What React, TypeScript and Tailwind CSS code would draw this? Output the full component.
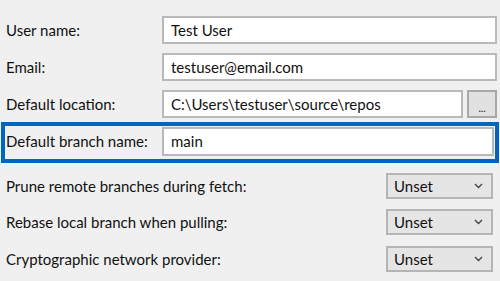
import React from "react";

const font = { fontFamily: 'Lato, "Open Sans", sans-serif' };

function TextInput({ value, className }: { value: string; className: string }) {
  return (
    <div
      className={`flex items-center bg-white border-2 border-[#b9b9b9] pl-[7px] text-[15px] text-[#111] ${className}`}
    >
      {value}
    </div>
  );
}

function Select() {
  return (
    <div className="flex items-center justify-between w-[107px] h-[26px] mr-[7px] bg-[#e5e5e5] border-2 border-[#b5b5b5] pl-[6px] pr-[8px] text-[15px] text-[#111]">
      <span>Unset</span>
      <svg width="9" height="6" viewBox="0 0 9 6">
        <path d="M1 1 L4.5 4.5 L8 1" stroke="#444" strokeWidth="1.4" fill="none" />
      </svg>
    </div>
  );
}

export default function App() {
  return (
    <div className="w-[500px] h-[281px] bg-[#f0f0f0] overflow-hidden flex flex-col text-[15px] text-[#111]" style={font}>
      <div className="flex items-center h-[28px] mt-[16px]">
        <div className="w-[162px] pl-[6px]">User name:</div>
        <TextInput value="Test User" className="w-[335px] h-[28px]" />
      </div>
      <div className="flex items-center h-[28px] mt-[9px]">
        <div className="w-[162px] pl-[6px]">Email:</div>
        <TextInput value="testuser@email.com" className="w-[335px] h-[28px]" />
      </div>
      <div className="flex items-center h-[28px] mt-[9px]">
        <div className="w-[162px] pl-[6px]">Default location:</div>
        <TextInput value="C:\Users\testuser\source\repos" className="w-[301px] h-[28px]" />
        <div className="ml-[4px] w-[30px] h-[28px] bg-[#e1e1e1] border-2 border-[#a8a8a8] flex items-end justify-center pb-[3px] text-[10px] leading-none font-bold text-[#333]">
          ...
        </div>
      </div>
      <div className="mt-[4px] ml-[1px] w-[498px] h-[41px] border-4 border-[#0067c0] flex items-start pt-[1px]">
        <div className="w-[157px] pl-[1px] h-[29px] flex items-center">Default branch name:</div>
        <TextInput value="main" className="w-[332px] h-[29px]" />
      </div>
      <div className="flex items-center justify-between h-[26px] mt-[10px]">
        <div className="pl-[6px]">Prune remote branches during fetch:</div>
        <Select />
      </div>
      <div className="flex items-center justify-between h-[26px] mt-[10px]">
        <div className="pl-[6px]">Rebase local branch when pulling:</div>
        <Select />
      </div>
      <div className="flex items-center justify-between h-[26px] mt-[11px]">
        <div className="pl-[6px]">Cryptographic network provider:</div>
        <Select />
      </div>
    </div>
  );
}
